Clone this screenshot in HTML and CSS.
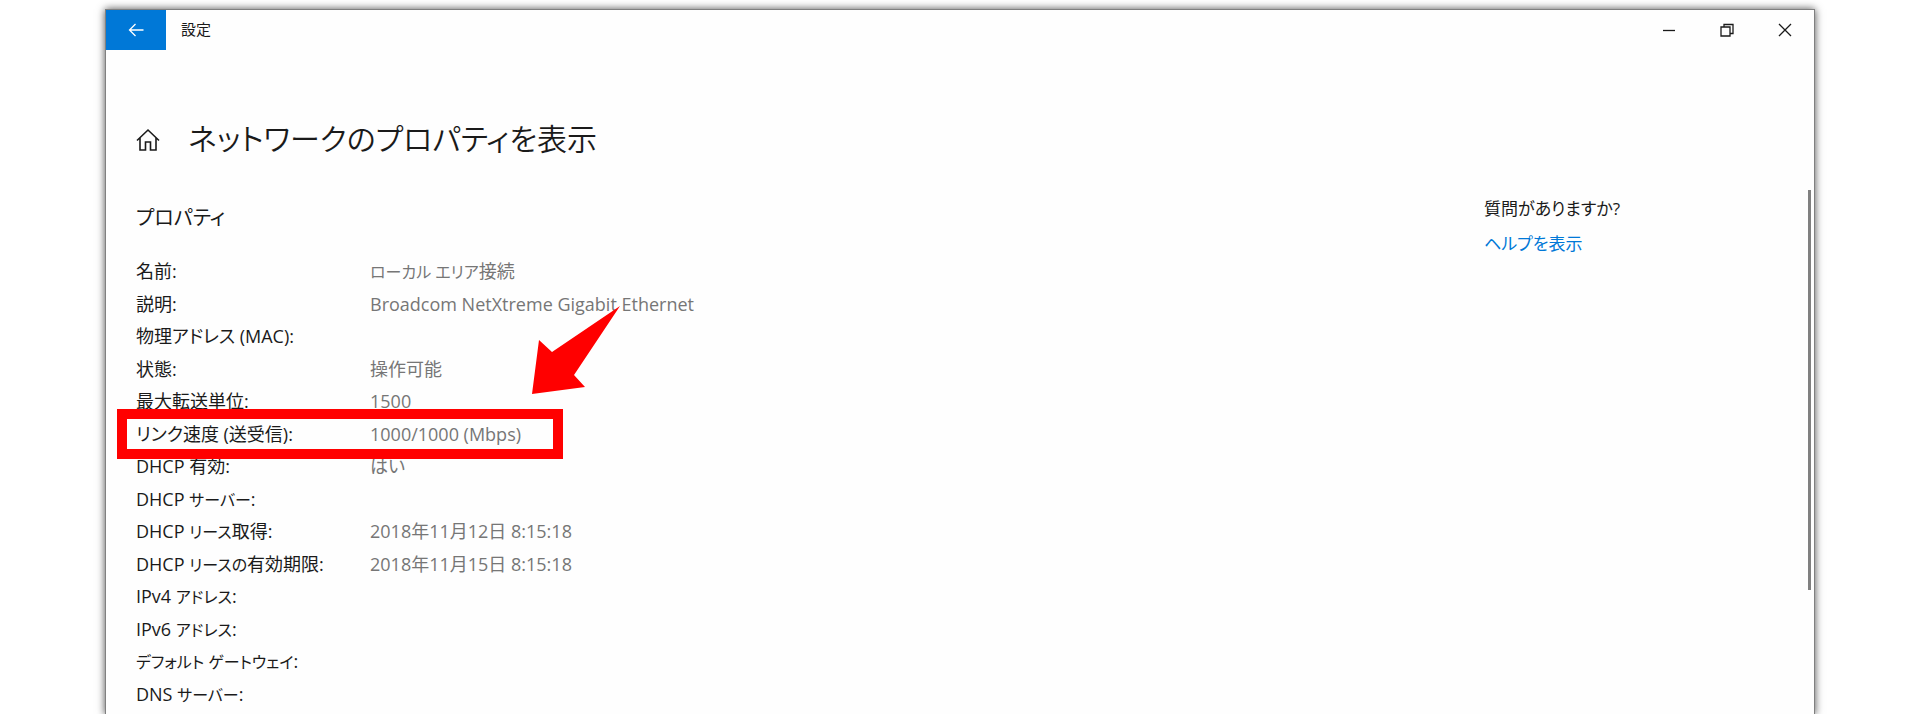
FILE: index.html
```html
<!DOCTYPE html>
<html lang="ja">

<head>
    <meta charset="UTF-8">
    <meta name="viewport" content="width=device-width, initial-scale=1.0">
    <title>設定</title>
    <link rel="stylesheet" href="styles.css">
</head>

<body>
    <div class="window">
        <header class="titlebar">
            <button class="back" type="button" aria-label="戻る">
                <svg width="16" height="14" viewBox="0 0 16 14"><path d="M15.5 7H1.5M7.5 1L1.5 7l6 6" /></svg>
            </button>
            <span class="app-name">設定</span>
            <div class="controls">
                <button type="button" aria-label="最小化">
                    <svg width="14" height="14" viewBox="0 0 14 14"><path d="M1 7.5h12" /></svg>
                </button>
                <button type="button" aria-label="元に戻す">
                    <svg width="14" height="14" viewBox="0 0 14 14"><path d="M1 4h9v9H1zM4 4V1.500h9v9h-3" /></svg>
                </button>
                <button type="button" aria-label="閉じる">
                    <svg width="14" height="14" viewBox="0 0 14 14"><path d="M1 1l12 12M13 1L1 13" /></svg>
                </button>
            </div>
        </header>

        <div class="page-title">
            <svg class="home" width="24" height="24" viewBox="0 0 24 24"><path d="M1 13.500L12 3l11 10.500M4 11v12h5.500v-8h5v8H20V11" /></svg>
            <h1>ネットワークのプロパティを表示</h1>
        </div>

        <main class="content">
            <section class="properties">
                <h2>プロパティ</h2>
                <table>
                    <tr><th scope="row">名前:</th><td><span class="kana">ローカル エリア</span>接続</td></tr>
                    <tr><th scope="row">説明:</th><td>Broadcom NetXtreme Gigabit Ethernet</td></tr>
                    <tr><th scope="row">物理アドレス (MAC):</th><td></td></tr>
                    <tr><th scope="row">状態:</th><td>操作可能</td></tr>
                    <tr><th scope="row">最大転送単位:</th><td>1500</td></tr>
                    <tr class="marked"><th scope="row">リンク速度 (送受信):</th><td>1000/1000 (Mbps)</td></tr>
                    <tr><th scope="row">DHCP 有効:</th><td>はい</td></tr>
                    <tr><th scope="row">DHCP <span class="kana">サーバー</span>:</th><td></td></tr>
                    <tr><th scope="row">DHCP <span class="kana">リース</span>取得:</th><td>2018年11月12日 8:15:18</td></tr>
                    <tr><th scope="row">DHCP <span class="kana">リースの</span>有効期限:</th><td>2018年11月15日 8:15:18</td></tr>
                    <tr><th scope="row">IPv4 <span class="kana">アドレス</span>:</th><td></td></tr>
                    <tr><th scope="row">IPv6 <span class="kana">アドレス</span>:</th><td></td></tr>
                    <tr><th scope="row"><span class="kana">デフォルト ゲートウェイ</span>:</th><td></td></tr>
                    <tr><th scope="row">DNS <span class="kana">サーバー</span>:</th><td></td></tr>
                </table>
                <svg class="arrow" width="88" height="88" viewBox="0 0 88 88"><path d="M0 88L7 34l13 12L88 0 42 69l11 12z" /></svg>
            </section>

            <aside class="help">
                <p>質問がありますか?</p>
                <a href="#">ヘルプを表示</a>
            </aside>

            <div class="scroll-thumb"></div>
        </main>
    </div>
</body>

</html>
```
FILE: styles.css
```css
* {
    box-sizing: border-box;
}

body {
    margin: 0;
    padding-top: 10px;
    background: #fff;
    color: #1a1a1a;
    font-family: "Open Sans", "Noto Sans CJK JP", sans-serif;
    font-size: 18px;
    font-feature-settings: "palt";
}

.window {
    margin: 0 106px;
    min-height: calc(100vh - 10px);
    background: #fefefe;
    box-shadow: 0 0 0 1px #808080, 0 0 8px 1px rgba(0, 0, 0, 0.7);
}

.titlebar {
    display: flex;
    align-items: center;
    height: 40px;
}

button {
    display: flex;
    align-items: center;
    justify-content: center;
    height: 40px;
    padding: 0;
    border: none;
    background: none;
}

svg path {
    fill: none;
    stroke: #1a1a1a;
    stroke-width: 1.3;
}

.back {
    width: 60px;
    background: #0078d7;
}

.back path {
    stroke: #fff;
}

.app-name {
    padding-bottom: 4px;
    margin-left: 15px;
    font-size: 15px;
}

.controls {
    display: flex;
    margin-left: auto;
}

.controls button {
    width: 58px;
}

.page-title {
    display: flex;
    align-items: center;
    gap: 28px;
    height: 140px;
    padding: 38px 30px 0;
}

.home path {
    stroke-width: 1.6;
}

h1 {
    margin: 0;
    font-size: 30px;
    font-weight: 350;
    line-height: 40px;
}

.content {
    display: flex;
    align-items: flex-start;
    padding: 0 3px 0 30px;
}

.properties {
    position: relative;
    flex: 1;
}

h2 {
    margin: 12px 0 21px;
    font-size: 20px;
    font-weight: 400;
    line-height: 32px;
}

table {
    border-collapse: collapse;
}

tr {
    height: 32px;
}

tr:nth-child(even) {
    height: 33px;
}

th,
td {
    padding: 0;
    line-height: 32px;
    white-space: nowrap;
}

th {
    width: 234px;
    font-weight: 400;
    text-align: left;
}

td {
    color: #767676;
}

.kana {
    font-size: 16px;
    line-height: 1;
}

.marked {
    position: relative;
}

.marked th::after {
    content: "";
    position: absolute;
    top: -8px;
    left: -19px;
    box-sizing: border-box;
    width: 446px;
    height: 50px;
    border: 10px solid #f00;
}

.arrow {
    position: absolute;
    top: 116px;
    left: 396px;
}

.arrow path {
    fill: #f00;
    stroke: none;
}

.help {
    width: 324px;
    padding-top: 3px;
    font-size: 17px;
}

.help p {
    margin: 0 0 3px;
    line-height: 32px;
}

.help a {
    color: #0078d7;
    line-height: 32px;
    text-decoration: none;
}

.scroll-thumb {
    width: 3px;
    height: 56vh;
    background: #808080;
}
```
